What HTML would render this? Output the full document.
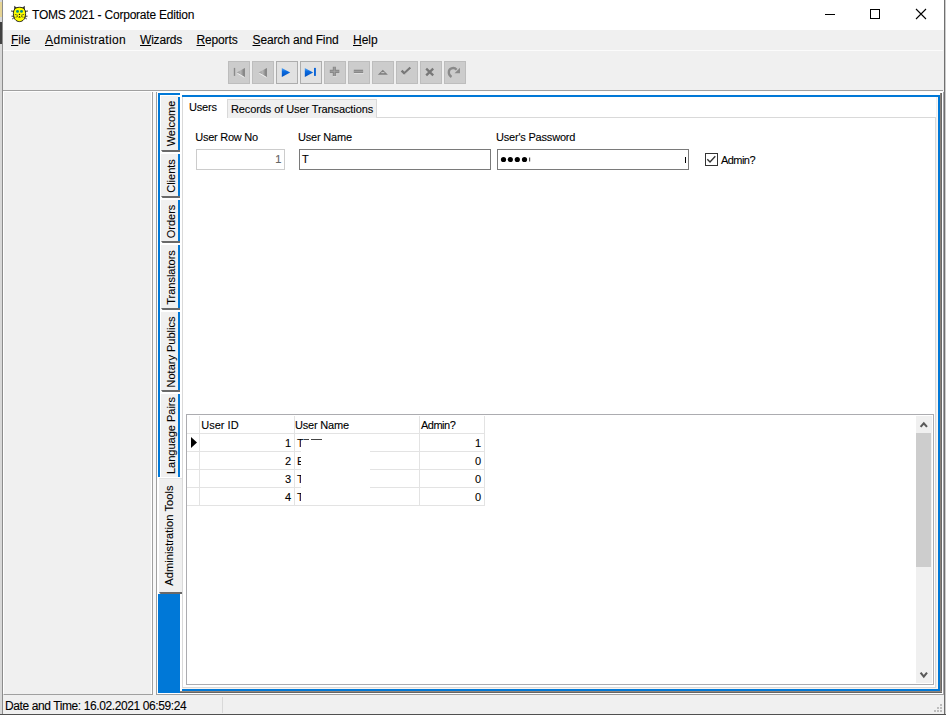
<!DOCTYPE html>
<html><head><meta charset="utf-8">
<style>
*{box-sizing:border-box;margin:0;padding:0}
html,body{width:946px;height:715px;overflow:hidden;background:#f0f0f0}
body{position:relative;font-family:"Liberation Sans",sans-serif;font-size:12px;color:#000;-webkit-text-stroke:0.1px #000}
.a{position:absolute}
.t{position:absolute;white-space:nowrap;line-height:1}
u{text-decoration:underline;text-underline-offset:1px;text-decoration-thickness:1px}
</style></head><body>

<!-- backdrop strips (other windows) -->
<div class="a" style="left:0;top:0;width:2px;height:715px;background:#d8d8d8"></div>
<div class="a" style="left:0;top:2px;width:2px;height:15px;background:#e6d494"></div>
<div class="a" style="left:0;top:22px;width:2px;height:22px;background:#404040"></div>
<div class="a" style="left:945px;top:0;width:1px;height:715px;background:#cccccc"></div>
<div class="a" style="left:0;top:714px;width:946px;height:1px;background:#505050"></div>
<!-- window border -->
<div class="a" style="left:2px;top:0;width:1px;height:714px;background:#8c8c8c"></div>
<div class="a" style="left:943px;top:92px;width:1px;height:603px;background:#a3a3a8"></div><div class="a" style="left:944px;top:0;width:1px;height:714px;background:#707070"></div>

<!-- title bar -->
<div class="a" style="left:3px;top:0;width:941px;height:30px;background:#fff"></div>
<svg class="a" style="left:11px;top:5px" width="17" height="18" viewBox="0 0 17 18">
 <path d="M3.3 0.8 L3 6 L6.5 3.2 Z M13.7 0.8 L14 6 L10.5 3.2 Z" fill="#2a2a2a"/>
 <path d="M3.8 2.5 L4 4.6 L5.3 3.4Z M13.2 2.5 L13 4.6 L11.7 3.4Z" fill="#bbb"/>
 <path d="M8.5 2.3 C12.6 2.3 14.6 4.6 14.6 8.5 C14.6 13.4 12.2 16.6 8.5 16.6 C4.8 16.6 2.4 13.4 2.4 8.5 C2.4 4.6 4.4 2.3 8.5 2.3 Z" fill="#ffff00" stroke="#111" stroke-width="0.9"/>
 <circle cx="6.5" cy="6.4" r="1.45" fill="#008b8b"/>
 <circle cx="10.5" cy="6.4" r="1.45" fill="#008b8b"/>
 <path d="M8.5 8.6 L7.6 10 L9.4 10Z" fill="#000"/>
 <path d="M8.5 10.9 L7.2 12.6 L9.8 12.6Z" fill="#000"/>
 <path d="M0 6 L3 6.4 M0.5 11.2 L3.2 11.2 M1.2 14 L3.5 12.4 M17 6 L14 6.4 M16.5 11.2 L13.8 11.2 M15.8 14 L13.5 12.4" stroke="#222" stroke-width="0.9"/>
 <path d="M3.8 9.3 L7 10.4 M13.2 9.3 L10 10.4 M4.5 12.3 L7 11.4 M12.5 12.3 L10 11.4" stroke="#333" stroke-width="0.7"/>
</svg>
<div class="t" style="left:32px;top:9px;font-size:12px;letter-spacing:-0.22px">TOMS 2021 - Corporate Edition</div>
<!-- window controls -->
<div class="a" style="left:825px;top:14px;width:10px;height:1px;background:#000"></div>
<div class="a" style="left:870px;top:9px;width:10px;height:10px;border:1px solid #000"></div>
<svg class="a" style="left:915px;top:8px" width="12" height="12" viewBox="0 0 12 12"><path d="M1 1 L11 11 M11 1 L1 11" stroke="#000" stroke-width="1.1"/></svg>

<!-- menu bar -->
<div class="a" style="left:3px;top:30px;width:940px;height:20px;background:#f0f0f0"></div>
<div class="a" style="left:3px;top:50px;width:940px;height:1px;background:#fbfbfb"></div>
<div class="t" style="left:11px;top:34px"><u>F</u>ile</div>
<div class="t" style="left:45px;top:34px;letter-spacing:0.36px"><u>A</u>dministration</div>
<div class="t" style="left:140px;top:34px;letter-spacing:-0.2px"><u>W</u>izards</div>
<div class="t" style="left:196.5px;top:34px;letter-spacing:-0.15px"><u>R</u>eports</div>
<div class="t" style="left:252.5px;top:34px;letter-spacing:-0.14px"><u>S</u>earch and Find</div>
<div class="t" style="left:353px;top:34px"><u>H</u>elp</div>

<!-- toolbar -->
<div class="a" style="left:228px;top:61px;width:22px;height:23px;background:#cccccc;border:1px solid #bdbdbd"></div>
<div class="a" style="left:252px;top:61px;width:22px;height:23px;background:#cccccc;border:1px solid #bdbdbd"></div>
<div class="a" style="left:276px;top:61px;width:22px;height:23px;background:#e1e1e1;border:1px solid #adadad"></div>
<div class="a" style="left:300px;top:61px;width:22px;height:23px;background:#e1e1e1;border:1px solid #adadad"></div>
<div class="a" style="left:324px;top:61px;width:22px;height:23px;background:#cccccc;border:1px solid #bdbdbd"></div>
<div class="a" style="left:348px;top:61px;width:22px;height:23px;background:#cccccc;border:1px solid #bdbdbd"></div>
<div class="a" style="left:372px;top:61px;width:22px;height:23px;background:#cccccc;border:1px solid #bdbdbd"></div>
<div class="a" style="left:396px;top:61px;width:22px;height:23px;background:#cccccc;border:1px solid #bdbdbd"></div>
<div class="a" style="left:420px;top:61px;width:22px;height:23px;background:#cccccc;border:1px solid #bdbdbd"></div>
<div class="a" style="left:444px;top:61px;width:22px;height:23px;background:#cccccc;border:1px solid #bdbdbd"></div>
<svg class="a" style="left:228px;top:61px" width="240" height="23" viewBox="0 0 240 23">
 <defs>
  <linearGradient id="bl" x1="0" y1="0" x2="0" y2="1"><stop offset="0" stop-color="#5aa8f5"/><stop offset="0.4" stop-color="#0a6be0"/><stop offset="1" stop-color="#0050c0"/></linearGradient>
  <linearGradient id="gr" x1="0" y1="0" x2="1" y2="0"><stop offset="0" stop-color="#9a9a9a"/><stop offset="0.5" stop-color="#b4b4b4"/><stop offset="1" stop-color="#747474"/></linearGradient>
 </defs>
 <!-- first -->
 <rect x="5.8" y="6.9" width="1.4" height="8" fill="#8a8a8a"/>
 <path d="M8.7 11.4 L16.8 6.9 L16.8 15.9 Z" fill="url(#gr)"/>
 <path d="M9.3 12.2 L16.3 16.3" stroke="#fff" stroke-width="0.9" opacity="0.75"/>
 <!-- prior -->
 <path d="M30.6 11.4 L38.8 6.9 L38.8 15.9 Z" fill="url(#gr)"/>
 <path d="M31.2 12.2 L38.3 16.3" stroke="#fff" stroke-width="0.9" opacity="0.75"/>
 <!-- next -->
 <path d="M53.8 6.9 L62.2 11.4 L53.8 15.9 Z" fill="url(#bl)"/>
 <!-- last -->
 <path d="M76.8 6.9 L85.2 11.4 L76.8 15.9 Z" fill="url(#bl)"/>
 <rect x="86" y="6.9" width="1.9" height="8" fill="#0a64d8"/>
 <!-- plus -->
 <path d="M104.8 5.8 h3.1 v2.9 h3.4 v3.2 h-3.4 v3.4 h-3.1 v-3.4 h-3 v-3.2 h3 Z" fill="#888"/>
 <path d="M106.3 6.3 v8.5 M102.3 10.3 h8.5" stroke="#b0b0b0" stroke-width="0.6"/>
 <path d="M108.4 15.6 h-3.6 M111.6 12.3 v-0.2" stroke="#fff" stroke-width="0.8" opacity="0.6"/>
 <!-- minus -->
 <rect x="125.8" y="8.7" width="9.3" height="3.4" fill="#888"/>
 <path d="M125.8 10.4 h9.3" stroke="#b0b0b0" stroke-width="0.6"/>
 <path d="M126 12.6 h9.6" stroke="#fff" stroke-width="0.8" opacity="0.6"/>
 <!-- edit triangle -->
 <path d="M149.8 13.7 L154.8 8.7 L159.9 13.7 Z" fill="#808080"/>
 <path d="M153.3 11.6 L156.4 11.6" stroke="#c8c8c8" stroke-width="1.1"/>
 <!-- check -->
 <path d="M173.6 9.6 L176.4 12.4 L182.4 6.6" stroke="#787878" stroke-width="2.4" fill="none"/>
 <path d="M175.5 14.3 L183.3 7.6" stroke="#fff" stroke-width="0.8" opacity="0.5"/>
 <!-- cancel -->
 <path d="M198.2 7.6 L205.2 14.4 M205.2 7.6 L198.2 14.4" stroke="#787878" stroke-width="2.3"/>
 <!-- refresh -->
 <path d="M223.5 16 C219.8 13.5 220 8.5 223.5 7.3 C225.5 6.6 227.5 7.4 228.6 8.8" stroke="#8a8a8a" stroke-width="2.3" fill="none"/>
 <path d="M232 6.8 L232 12.2 L226.6 12.2 Z" fill="#8a8a8a"/>
</svg>

<div class="a" style="left:3px;top:90px;width:940px;height:1px;background:#a0a0a0"></div>
<div class="a" style="left:3px;top:91px;width:940px;height:1px;background:#fdfdfd"></div>


<!-- left panel -->
<div class="a" style="left:3px;top:92px;width:150px;height:603px;background:#f0f0f0;border-left:1px solid #fff;border-bottom:1px solid #a0a0a0"></div>
<div class="a" style="left:151px;top:92px;width:1px;height:602px;background:#fff"></div>
<div class="a" style="left:152px;top:92px;width:1px;height:603px;background:#a0a0a0"></div>
<div class="a" style="left:153px;top:92px;width:3px;height:603px;background:#f8f8f8"></div>

<!-- right container -->
<div class="a" style="left:156px;top:92px;width:787px;height:603px;background:#fff;border-left:1px solid #a0a0a0;border-bottom:1px solid #a0a0a0"></div>

<!-- vertical tab strip -->
<div class="a" style="left:158px;top:93px;width:22px;height:2px;background:#0078d7"></div>
<div class="a" style="left:158px;top:93px;width:2px;height:384px;background:#0078d7"></div>
<div class="a" style="left:161px;top:96px;width:17px;height:54px;background:#f0f0f0"></div>
<div class="a" style="left:178px;top:97px;width:2px;height:53px;background:#0078d7"></div>
<svg class="a" style="left:160px;top:150px" width="20" height="2"><path d="M1 0 H20 V2 H2.5 Z" fill="#696969"/></svg>
<div class="t" style="left:158px;top:152px;width:57px;height:22px;transform-origin:0 0;transform:rotate(-90deg);text-align:center;font-size:11px;padding-top:8px">Welcome</div>
<div class="a" style="left:161px;top:154px;width:17px;height:42px;background:#f0f0f0"></div>
<div class="a" style="left:178px;top:154px;width:2px;height:42px;background:#0078d7"></div>
<svg class="a" style="left:160px;top:196px" width="20" height="2"><path d="M1 0 H20 V2 H2.5 Z" fill="#696969"/></svg>
<div class="t" style="left:158px;top:198px;width:44px;height:22px;transform-origin:0 0;transform:rotate(-90deg);text-align:center;font-size:11px;padding-top:8px">Clients</div>
<div class="a" style="left:161px;top:200px;width:17px;height:41px;background:#f0f0f0"></div>
<div class="a" style="left:178px;top:200px;width:2px;height:41px;background:#0078d7"></div>
<svg class="a" style="left:160px;top:241px" width="20" height="2"><path d="M1 0 H20 V2 H2.5 Z" fill="#696969"/></svg>
<div class="t" style="left:158px;top:243px;width:43px;height:22px;transform-origin:0 0;transform:rotate(-90deg);text-align:center;font-size:11px;padding-top:8px">Orders</div>
<div class="a" style="left:161px;top:245px;width:17px;height:63px;background:#f0f0f0"></div>
<div class="a" style="left:178px;top:245px;width:2px;height:63px;background:#0078d7"></div>
<svg class="a" style="left:160px;top:308px" width="20" height="2"><path d="M1 0 H20 V2 H2.5 Z" fill="#696969"/></svg>
<div class="t" style="left:158px;top:310px;width:65px;height:22px;transform-origin:0 0;transform:rotate(-90deg);text-align:center;font-size:11px;padding-top:8px">Translators</div>
<div class="a" style="left:161px;top:312px;width:17px;height:78px;background:#f0f0f0"></div>
<div class="a" style="left:178px;top:312px;width:2px;height:78px;background:#0078d7"></div>
<svg class="a" style="left:160px;top:390px" width="20" height="2"><path d="M1 0 H20 V2 H2.5 Z" fill="#696969"/></svg>
<div class="t" style="left:158px;top:392px;width:80px;height:22px;transform-origin:0 0;transform:rotate(-90deg);text-align:center;font-size:11px;padding-top:8px">Notary Publics</div>
<div class="a" style="left:161px;top:394px;width:17px;height:83px;background:#f0f0f0"></div>
<div class="a" style="left:178px;top:394px;width:2px;height:83px;background:#0078d7"></div>
<div class="t" style="left:158px;top:477px;width:83px;height:22px;transform-origin:0 0;transform:rotate(-90deg);text-align:center;font-size:11px;padding-top:8px">Language Pairs</div>
<div class="a" style="left:157px;top:477px;width:25px;height:117px;background:#f0f0f0;border-left:2px solid #fff;border-top:1px solid #fff"></div>
<div class="a" style="left:159px;top:478px;width:23px;height:1px;background:#e3e3e3"></div>
<svg class="a" style="left:158px;top:592px" width="24" height="2"><path d="M1 0 H24 V2 H2.5 Z" fill="#696969"/></svg>
<div class="t" style="left:157px;top:594px;width:117px;height:22px;transform-origin:0 0;transform:rotate(-90deg);text-align:center;font-size:11px;padding-top:7px;letter-spacing:0.1px">Administration Tools</div>
<div class="a" style="left:158px;top:594px;width:22px;height:99px;background:#0078d7"></div>

<!-- main panel frame -->
<div class="a" style="left:940px;top:93px;width:1px;height:600px;background:#8a827a"></div><div class="a" style="left:941px;top:93px;width:1px;height:600px;background:#666"></div>
<div class="a" style="left:180px;top:691px;width:762px;height:1px;background:#8e8780"></div><div class="a" style="left:180px;top:692px;width:762px;height:1px;background:#646464"></div>
<div class="a" style="left:182px;top:95px;width:758px;height:596px;border:2px solid #0078d7;border-left:none"></div>
<div class="a" style="left:182px;top:97px;width:1px;height:591px;background:#d9d9d9"></div>
<div class="a" style="left:182px;top:687px;width:754px;height:1px;background:#d9d9d9"></div>
<div class="a" style="left:935px;top:117px;width:1px;height:571px;background:#d9d9d9"></div>
<div class="a" style="left:376px;top:117px;width:560px;height:1px;background:#d9d9d9"></div>

<div class="a" style="left:936px;top:97px;width:1px;height:591px;background:#efefef"></div><div class="a" style="left:937px;top:97px;width:1px;height:592px;background:#fdf8f2"></div><div class="a" style="left:182px;top:688px;width:756px;height:1px;background:#fbf4ee"></div>
<!-- inner tabs -->
<div class="a" style="left:227px;top:99px;width:150px;height:19px;background:#f0f0f0;border:1px solid #d9d9d9;border-bottom:none"></div>
<div class="t" style="left:189px;top:102px;font-size:11px;letter-spacing:-0.2px">Users</div>
<div class="t" style="left:231px;top:104px;font-size:11px;letter-spacing:-0.1px">Records of User Transactions</div>

<!-- form -->
<div class="t" style="left:195.3px;top:132px;font-size:11px;letter-spacing:-0.27px">User Row No</div>
<div class="t" style="left:298px;top:132px;font-size:11px;letter-spacing:-0.2px">User Name</div>
<div class="t" style="left:496px;top:132px;font-size:11px;letter-spacing:-0.2px">User's Password</div>
<div class="a" style="left:196px;top:149px;width:89px;height:21px;border:1px solid #cccccc;background:#fff"></div>
<div class="t" style="left:275.3px;top:154px;font-size:11px;color:#6d6d6d">1</div>
<div class="a" style="left:299px;top:149px;width:192px;height:21px;border:1px solid #7a7a7a;background:#fff"></div>
<div class="t" style="left:302px;top:154px;font-size:11px">T</div>
<div class="a" style="left:497px;top:149px;width:192px;height:21px;border:1px solid #7a7a7a;background:#fff"></div>
<svg class="a" style="left:498px;top:154px" width="40" height="11"><g fill="#000"><circle cx="5.5" cy="5.5" r="2.6"/><circle cx="12.3" cy="5.5" r="2.6"/><circle cx="19.3" cy="5.5" r="2.6"/><circle cx="26.5" cy="5.5" r="2.6"/></g><rect x="31" y="3.5" width="1.2" height="4" fill="#555"/></svg>
<div class="a" style="left:685px;top:157px;width:1px;height:6px;background:#000"></div>
<div class="a" style="left:705px;top:153px;width:13px;height:13px;border:1px solid #333;background:#fff"></div>
<svg class="a" style="left:705px;top:153px" width="13" height="13" viewBox="0 0 13 13"><path d="M2.3 6.3 L5 9 L10.3 3.3" stroke="#333" stroke-width="1.35" fill="none"/></svg>
<div class="t" style="left:721px;top:155px;font-size:11px;letter-spacing:-0.55px">Admin?</div>

<!-- grid -->
<div class="a" style="left:186px;top:414px;width:748px;height:271px;border:1px solid #acacb0;background:#fff"></div>
<div class="a" style="left:187px;top:433px;width:298px;height:1px;background:#e3e3e3"></div>
<div class="a" style="left:199px;top:416px;width:1px;height:90px;background:#e3e3e3"></div>
<div class="a" style="left:294px;top:416px;width:1px;height:90px;background:#e3e3e3"></div>
<div class="a" style="left:419px;top:416px;width:1px;height:90px;background:#e3e3e3"></div>
<div class="a" style="left:484px;top:416px;width:1px;height:90px;background:#e3e3e3"></div>
<div class="a" style="left:187px;top:451px;width:298px;height:1px;background:#e3e3e3"></div>
<div class="a" style="left:187px;top:469px;width:298px;height:1px;background:#e3e3e3"></div>
<div class="a" style="left:187px;top:487px;width:298px;height:1px;background:#e3e3e3"></div>
<div class="a" style="left:187px;top:505px;width:298px;height:1px;background:#e3e3e3"></div>
<div class="t" style="left:201.3px;top:420px;font-size:11px">User ID</div>
<div class="t" style="left:295px;top:420px;font-size:11px;letter-spacing:-0.2px">User Name</div>
<div class="t" style="left:421px;top:420px;font-size:11px;letter-spacing:-0.5px">Admin?</div>
<div class="t" style="left:200px;top:438px;width:91px;text-align:right;font-size:11px">1</div>
<div class="t" style="left:297px;top:438px;font-size:11px">T</div>
<div class="t" style="left:420px;top:438px;width:61px;text-align:right;font-size:11px">1</div>
<div class="t" style="left:200px;top:456px;width:91px;text-align:right;font-size:11px">2</div>
<div class="t" style="left:297px;top:456px;font-size:11px">E</div>
<div class="t" style="left:420px;top:456px;width:61px;text-align:right;font-size:11px">0</div>
<div class="t" style="left:200px;top:474px;width:91px;text-align:right;font-size:11px">3</div>
<div class="t" style="left:297px;top:474px;font-size:11px">T</div>
<div class="t" style="left:420px;top:474px;width:61px;text-align:right;font-size:11px">0</div>
<div class="t" style="left:200px;top:492px;width:91px;text-align:right;font-size:11px">4</div>
<div class="t" style="left:297px;top:492px;font-size:11px">T</div>
<div class="t" style="left:420px;top:492px;width:61px;text-align:right;font-size:11px">0</div>
<div class="a" style="left:301px;top:441px;width:69px;height:64px;background:#fff"></div>
<div class="a" style="left:304px;top:439px;width:5px;height:1px;background:#444"></div><div class="a" style="left:311px;top:439px;width:11px;height:1px;background:#444"></div>
<svg class="a" style="left:190px;top:436px" width="9" height="13"><path d="M1 1 L7 6.5 L1 12 Z" fill="#000"/></svg>
<div class="a" style="left:916px;top:416px;width:16px;height:267px;background:#f0f0f0"></div>
<div class="a" style="left:916px;top:433px;width:15px;height:134px;background:#cdcdcd"></div>
<svg class="a" style="left:916px;top:416px" width="16" height="17"><path d="M4.6 10.9 L7.8 7.4 L11 10.9" stroke="#5a5a5a" stroke-width="2.1" fill="none"/></svg>
<svg class="a" style="left:916px;top:666px" width="16" height="17"><path d="M4.6 6.6 L7.8 10.6 L11 6.6" stroke="#5a5a5a" stroke-width="2.1" fill="none"/></svg>

<!-- blue fill under tabs -->

<!-- status bar -->
<div class="t" style="left:5px;top:700px;font-size:12px;letter-spacing:-0.4px">Date and Time: 16.02.2021 06:59:24</div>
<div class="a" style="left:222px;top:697px;width:1px;height:16px;background:#d9d9d9"></div>
<svg class="a" style="left:932px;top:704px" width="12" height="12"><g fill="#bdbdbd"><rect x="8" y="0" width="2" height="2"/><rect x="5" y="3" width="2" height="2"/><rect x="8" y="3" width="2" height="2"/><rect x="2" y="6" width="2" height="2"/><rect x="5" y="6" width="2" height="2"/><rect x="8" y="6" width="2" height="2"/></g></svg>
</body></html>
